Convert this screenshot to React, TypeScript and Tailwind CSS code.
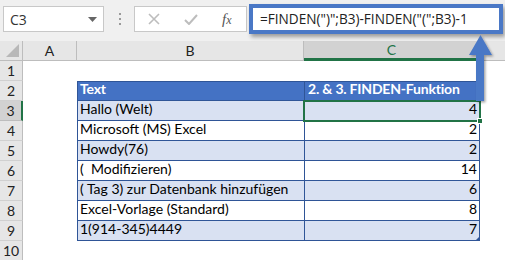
import React from "react";

type Row = { n: number; b?: string; c?: string; kind: "empty" | "head" | "odd" | "even" };

const rows: Row[] = [
  { n: 1, kind: "empty" },
  { n: 2, b: "Text", c: "2. & 3. FINDEN-Funktion", kind: "head" },
  { n: 3, b: "Hallo (Welt)", c: "4", kind: "odd" },
  { n: 4, b: "Microsoft (MS) Excel", c: "2", kind: "even" },
  { n: 5, b: "Howdy(76)", c: "2", kind: "odd" },
  { n: 6, b: "(  Modifizieren)", c: "14", kind: "even" },
  { n: 7, b: "( Tag 3) zur Datenbank hinzufügen", c: "6", kind: "odd" },
  { n: 8, b: "Excel-Vorlage (Standard)", c: "8", kind: "even" },
  { n: 9, b: "1(914-345)4449", c: "7", kind: "odd" },
  { n: 10, kind: "empty" },
];

function RowHead({ n }: { n: number }) {
  const sel = n === 3;
  return (
    <div
      className={
        "h-[20px] flex items-center justify-center border-b border-r text-[14px] text-[#222] " +
        (sel
          ? "bg-[#d2d2d2] border-b-[#bdbdbd] border-r-2 border-r-[#217346]"
          : "bg-[#e6e6e6] border-b-[#d0d0d0] border-r-[#bdbdbd]")
      }
    >
      {n}
    </div>
  );
}

function TableRow({ r }: { r: Row }) {
  if (r.kind === "empty") {
    return (
      <>
        <RowHead n={r.n} />
        <div className="h-[20px] bg-white" />
        <div className="h-[20px] bg-white" />
        <div className="h-[20px] bg-white" />
        <div className="h-[20px] bg-white" />
      </>
    );
  }
  const bg =
    r.kind === "head"
      ? "bg-[#4472c4] text-white font-bold tracking-[-0.2px]"
      : r.kind === "odd"
      ? "bg-[#d9e1f2] text-black"
      : "bg-white text-black";
  const top = r.kind === "head" ? " border-t border-t-[#2f5597]" : "";
  return (
    <>
      <RowHead n={r.n} />
      <div className="h-[20px] bg-white" />
      <div className={"h-[20px] flex items-end pb-[1px] pl-[2px] whitespace-pre border-l border-b border-[#2f5597] " + bg + top}>
        {r.b}
      </div>
      <div
        className={
          "h-[20px] flex items-end pb-[1px] px-[2px] whitespace-pre border-l border-r border-b border-[#2f5597] " +
          (r.kind === "head" ? "justify-start pl-[3px] " : "justify-end ") +
          bg +
          top
        }
      >
        {r.c}
      </div>
      <div className="h-[20px] bg-white" />
    </>
  );
}

export default function App() {
  return (
    <div className="relative w-[505px] h-[260px] overflow-hidden bg-white font-[Lato,sans-serif] text-[14px]">
      {/* top bar */}
      <div className="h-[41px] bg-[#f0f0f0] flex items-start relative">
        <div className="ml-[3px] mt-[6px] w-[101px] h-[26px] bg-white border border-[#c8c8c8] flex items-center justify-between pl-[6px] pr-[6px]">
          <span className="text-[14px] text-[#333] font-['Open_Sans',sans-serif]">C3</span>
          <svg width="9" height="5" viewBox="0 0 9 5">
            <polygon points="0,0 9,0 4.5,5" fill="#666" />
          </svg>
        </div>
        <div className="ml-[15px] mt-[13px] flex flex-col gap-[3px]">
          <div className="w-[2px] h-[2px] bg-[#9a9a9a]" />
          <div className="w-[2px] h-[2px] bg-[#9a9a9a]" />
          <div className="w-[2px] h-[2px] bg-[#9a9a9a]" />
        </div>
        <div className="ml-[13px] mt-[6px] w-[113px] h-[26px] bg-white border border-[#c8c8c8] flex items-center">
          <svg className="ml-[13px]" width="12" height="12" viewBox="0 0 12 12">
            <path d="M1 1 L11 11 M11 1 L1 11" stroke="#bdbdbd" strokeWidth="1.6" />
          </svg>
          <svg className="ml-[24px]" width="14" height="11" viewBox="0 0 14 11">
            <path d="M1 6 L5 10 L13 1" stroke="#bdbdbd" strokeWidth="2" fill="none" />
          </svg>
          <span className="ml-[24px] font-['Liberation_Serif',serif] italic text-[15px] text-[#555] leading-none">
            f<span className="text-[12px]">x</span>
          </span>
        </div>
        <div className="ml-[2px] mt-[4px] w-[254px] h-[30px] bg-white border-[4px] border-[#4a78c6] shadow-[2px_3px_4px_rgba(0,0,0,0.35)] flex items-center pl-[7px]">
          <span className="text-[13.6px] text-[#222] font-['Open_Sans',sans-serif] whitespace-nowrap">
            =FINDEN(")";B3)-FINDEN("(";B3)-1
          </span>
        </div>
      </div>

      {/* grid */}
      <div className="grid grid-cols-[23px_54px_227px_176px_25px]">
        <div className="h-[20px] bg-[#e6e6e6] border-r border-b border-[#bdbdbd] flex items-end justify-end p-[3px]">
          <svg width="13" height="13" viewBox="0 0 13 13">
            <polygon points="13,0 13,13 0,13" fill="#b8b8b8" />
          </svg>
        </div>
        <div className="h-[20px] bg-[#e6e6e6] border-r border-b border-[#bdbdbd] flex items-center justify-center text-[14px] text-[#222]">A</div>
        <div className="h-[20px] bg-[#e6e6e6] border-r border-b border-[#bdbdbd] flex items-center justify-center text-[14px] text-[#222]">B</div>
        <div className="h-[20px] bg-[#d2d2d2] border-r border-[#bdbdbd] border-b-[3px] border-b-[#217346] flex items-center justify-center text-[14px] text-[#217346]">C</div>
        <div className="h-[20px] bg-[#e6e6e6] border-b border-[#bdbdbd]" />
        {rows.map((r) => (
          <TableRow key={r.n} r={r} />
        ))}
      </div>

      {/* selected cell C3 */}
      <div className="absolute left-[303px] top-[100px] w-[178px] h-[22px] border-2 border-[#217346]" />
      <div className="absolute left-[477px] top-[118px] w-[6px] h-[6px] bg-[#217346] border border-white" />

      {/* table resize marker */}
      <svg className="absolute left-[475px] top-[236px]" width="5" height="5" viewBox="0 0 5 5">
        <polygon points="5,0 5,5 0,5" fill="#2f5597" />
      </svg>

      {/* arrow */}
      <svg className="absolute left-[466px] top-[33px]" width="30" height="74" viewBox="0 0 30 74">
        <defs>
          <filter id="sh" x="-50%" y="-20%" width="200%" height="150%">
            <feDropShadow dx="1.5" dy="1.5" stdDeviation="1" floodColor="#000" floodOpacity="0.35" />
          </filter>
        </defs>
        <g filter="url(#sh)">
          <polygon points="14.5,2 26,22 18,22 18,68 10,68 10,22 3,22" fill="#4a78c6" />
        </g>
      </svg>
    </div>
  );
}
